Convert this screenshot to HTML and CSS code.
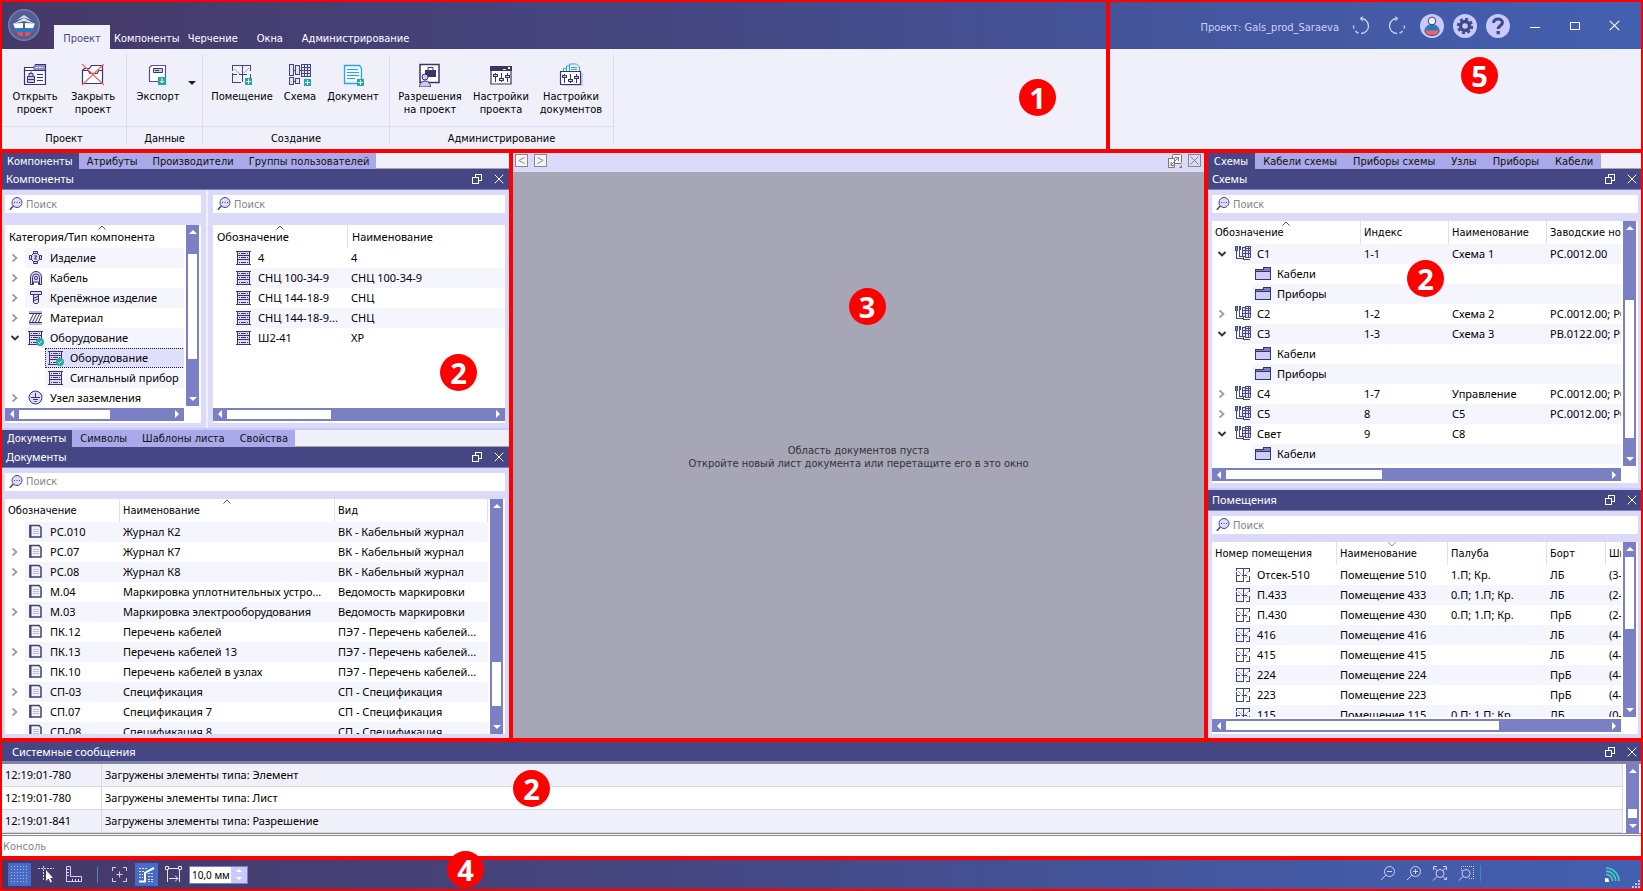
FILE: index.html
```html
<!DOCTYPE html>
<html lang="ru">
<head>
<meta charset="utf-8">
<title>Gals_prod_Saraeva</title>
<link rel="stylesheet" href="styles.css">
</head>
<body>
<svg class="sprite" aria-hidden="true">
  <symbol id="i-search" viewBox="0 0 14 14"><circle cx="8" cy="5.5" r="5" fill="#dcdcfa" stroke="#4a4580"/><path d="M4.3 9 .8 12.8" stroke="#4a4580" stroke-width="1.6"/><path d="M5 5h1v1H5zM7.500 5h1v1h-1zM10 5h1v1h-1z" fill="#4a4580"/></symbol>
  <symbol id="i-right" viewBox="0 0 8 10"><path d="M1.500 1.500 5.500 5l-4 3.500" fill="none" stroke="#9b9b9b" stroke-width="1.700"/></symbol>
  <symbol id="i-down" viewBox="0 0 10 8"><path d="M1.500 2 5 5.500 8.500 2" fill="none" stroke="#333" stroke-width="1.900"/></symbol>
  <symbol id="i-up-sort" viewBox="0 0 8 5"><path d="M.5 4.500 4 1l3.500 3.500" fill="none" stroke="#555"/></symbol>
  <symbol id="i-down-sort" viewBox="0 0 8 5"><path d="M.5.5 4 4 7.500.5" fill="none" stroke="#888"/></symbol>
  <symbol id="i-rack" viewBox="0 0 16 16"><g shape-rendering="crispEdges"><path d="M2 1h11v13H2z" fill="#dcdcfa"/><path d="M0 1h15v1H0zM1 5h13v1H1zM1 9h13v1H1zM0 14h15v1H0zM1 1h1v13H1zM13 1h1v13h-1zM3 3h1v1H3zM5 3h5v1H5zM11 3h1v1h-1zM3 7h1v1H3zM5 7h5v1H5zM11 7h1v1h-1zM3 12h1v1H3zM5 12h5v1H5zM11 12h1v1h-1z" fill="#3c3466"/></g></symbol>
  <symbol id="i-check" viewBox="0 0 16 16"><circle cx="12" cy="12" r="4" fill="#25a9a6"/><path d="m10 12 1.500 1.500L14 10.800" fill="none" stroke="#fff"/></symbol>
  <symbol id="i-item" viewBox="0 0 16 16"><g fill="#dcdcfa" stroke="#3c3466"><path d="M7.500 1v13M1 7.500h13"/><path d="M5.500 1.500h4v2h-4zM5.500 11.500h4v2h-4zM1.500 5.500h2v4h-2zM11.500 5.500h2v4h-2z"/><path d="M5.500 3.500h4l2 2v4l-2 2h-4l-2-2v-4z"/><path d="M6 6h3L6.500 9H9" fill="none"/></g></symbol>
  <symbol id="i-cable" viewBox="0 0 16 16"><g fill="none" stroke="#3c3466"><path d="M2.500 14.500V7a5.500 5.500 0 0 1 11 0v7.500h-3V12h-5v2.500z" fill="#dcdcfa"/><path d="M4.500 14V7.500a3.500 3.500 0 0 1 7 0V14"/><circle cx="8" cy="8" r="1.600"/></g></symbol>
  <symbol id="i-bolt" viewBox="0 0 16 16"><g fill="#dcdcfa" stroke="#3c3466"><path d="M2.500 1.500h11v3h-11z"/><path d="M5.500 4.500h5v8l-1 1h-3l-1-1z"/><path d="m6 8 4-1.500M6 10.500 10 9"/></g></symbol>
  <symbol id="i-material" viewBox="0 0 16 16"><path d="M1 1h13v2H1zM1 13h13v2H1z" fill="#b9b9ee"/><path d="M1 3.500h13M1 12.500h13M1.500 12 5.500 4m-1 8 4-8m-1 8 4-8m-1 8 3-7" fill="none" stroke="#3c3466"/></symbol>
  <symbol id="i-ground" viewBox="0 0 16 16"><circle cx="7.500" cy="7.500" r="6.500" fill="#dcdcfa" stroke="#3c3466"/><path d="M7.500 3v5M3 7.500h9M5 9.500h5M6.500 11.500h2" stroke="#3c3466"/></symbol>
  <symbol id="i-doc" viewBox="0 0 16 16"><path d="M2 1.500h9l2 2V13H2z" fill="#f3f0fb" stroke="#3d4470" stroke-width="1.500"/><path d="M2.500 1v12.500" stroke="#3d4470" stroke-width="2"/><path d="M5 5.500h6M5 7.500h6M5 9.500h6" stroke="#bdbdd4"/></symbol>
  <symbol id="i-scheme" viewBox="0 0 16 16"><g fill="none" stroke="#454a84" shape-rendering="crispEdges"><path d="M.5.500h2v4h-2zM4.500.500h1v3h-1z" fill="#7b80c4"/><path d="M7.500 1.500h3v9h-3zM10.500.500h5v11h-5z" fill="#e3e3fb"/><path d="M7 4.500h9M7 7.500h9M11 2.500h5M13.500 0v12"/><path d="M1.500 5v7.500H8M4.500 4v6.500H7M8.500 11v2.500h6"/></g></symbol>
  <symbol id="i-folder" viewBox="0 0 16 16"><g stroke="#3c3466" shape-rendering="crispEdges"><path d="M.5 4.500h15v9H.5z" fill="#cdcdfb"/><path d="M.5 5.500v-2h8v-2h7v4z" fill="#7b80c4"/></g></symbol>
  <symbol id="i-room" viewBox="0 0 16 16"><path d="M3 4l4 4M10 8l4-4M10 11l3-2" fill="none" stroke="#a5a5d6"/><g fill="none" stroke="#3f4580" shape-rendering="crispEdges"><path d="M1.500 4V1.500h13V5M1.500 5v9.500H9M11 14.500h3.500V9M8.500 1v13M2 8.500h3M7 8.500h5"/></g></symbol>
  <symbol id="i-restore" viewBox="0 0 10 10"><path d="M.5 3.500h6v6h-6zM3.500 3V.5h6v6H7" fill="none" stroke="#fff" shape-rendering="crispEdges"/></symbol>
  <symbol id="i-close" viewBox="0 0 10 10"><path d="m.7.7 8.600 8.600M9.300.7.7 9.300" stroke="currentColor" fill="none"/></symbol>
  <symbol id="i-sliders" viewBox="0 0 22 18"><path d="M1 1h20v16H1z" fill="#fff" stroke="#3c3466" stroke-width="1.200"/><g stroke="#3c3466" fill="#c9c9fb" shape-rendering="crispEdges"><path d="M5.500 6v9M11.500 6v9M17.500 6v9"/><path d="M3.500 7.500h4v2h-4zM9.500 11.500h4v2h-4zM15.500 8.500h4v2h-4z"/></g></symbol>
  <symbol id="i-plus" viewBox="0 0 7 7"><path d="M0 0h7v7H0z" fill="#25a9a6"/><path d="M3.500 1v5M1 3.500h5" stroke="#fff"/></symbol>
</svg>

<div class="app">
  <header class="top">
    <section class="frame ribbon-zone">
      <div class="titlebar">
        <svg class="logo" viewBox="0 0 32 32" aria-label="Логотип"><circle cx="16" cy="16" r="15.200" fill="#526097" stroke="#7a7ca6" stroke-width="1.600"/><path d="M9 11l7-5 7 5-7-2.500zM6 14.500 16 9l10 5.500-10-2.500z" fill="#dfe3f0"/><path d="M5 14.500 15 14v5l-8 .5zM27 14.500 17 14v5l8 .5z" fill="#fff"/><path d="m6.500 19.500 8.500-.5v4l-7 .5zM25.500 19.500 17 19v4l7 .5z" fill="#1f7fc6"/><path d="m8.500 23.500 6.500-.5v4h-3.500zM23.500 23.500 17 23v4h3.500z" fill="#ee4f57"/></svg>
        <nav class="menu">
          <button class="menu-tab on">Проект</button><button class="menu-tab">Компоненты</button><button class="menu-tab">Черчение</button><button class="menu-tab">Окна</button><button class="menu-tab">Администрирование</button>
        </nav>
      </div>
      <div class="ribbon">
        <div class="group">
          <div class="tools">
            <button class="tool w58"><svg viewBox="0 0 24 24"><path d="M1.500 4.500h9l2-3h10v20h-21z" fill="#f4f4ff" stroke="#3c3466" stroke-width="1.200"/><path d="M11 2h11v5H10z" fill="#8b8fd0"/><path d="M2 7.500h20" stroke="#3c3466"/><path d="M13 4.500h7" stroke="#fff" stroke-dasharray="2 1"/><path d="M4.500 13.500h7v6h-7zM6 13v-2.500h4V13M8 8.500v2" fill="#c9c9fb" stroke="#3c3466"/><path d="M4 16.500h8M14 11.500h6M14 14.500h6M14 17.500h6" stroke="#3c3466"/></svg>Открыть<br>проект</button>
            <button class="tool w58"><svg viewBox="0 0 24 24"><path d="M1.500 20.500v-13l2-2h5l2-3h11v18zM2 7.500h5l2 3h7l2-3h4" fill="#fff" stroke="#3c3466" stroke-width="1.200"/><path d="m1 1 22 21M23 1 1 22" stroke="#f0625f" stroke-width="1.100"/></svg>Закрыть<br>проект</button>
          </div>
          <div class="group-name">Проект</div>
        </div>
        <div class="group data">
          <div class="tools">
            <button class="tool w60"><svg viewBox="0 0 24 24"><path d="M3.500 18.500v-14l2-2h14v16z" fill="#fff" stroke="#56528c" stroke-width="1.200"/><path d="M7.500 5.500h9v4h-9z" fill="#c9c9fb" stroke="#3c3466"/><path d="M9 7.500h4" stroke="#3c3466"/><path d="M12 14h8v8h-8z" fill="#25a9a6"/><path d="M16 15v5m-2-2 2 2 2-2" fill="none" stroke="#fff"/></svg>Экспорт</button>
            <button class="drop" aria-label="Ещё"></button>
          </div>
          <div class="group-name">Данные</div>
        </div>
        <div class="group create">
          <div class="tools">
            <button class="tool w72"><svg viewBox="0 0 24 24"><path d="m4 6 6 5M14 10l5-5" stroke="#a5a5d6"/><g fill="none" stroke="#3f4580" shape-rendering="crispEdges"><path d="M2.500 8V2.500h18V8M2.500 10v9.500H11M20.500 11v4M12.500 2v17M3 11.500h4M9 11.500h8"/></g><use href="#i-plus" x="15" y="15" width="7" height="7"/></svg>Помещение</button>
            <button class="tool w44"><svg viewBox="0 0 24 24"><g fill="#e3e3fb" stroke="#3f4580" shape-rendering="crispEdges"><path d="M1.500 1.500h4v11h-4zM7.500 2.500h4v9h-4zM13.500 1.500h9v12h-9zM1.500 14.500h4v7h-4zM7.500 15.500h4v5h-4z"/><path d="M13.500 4.500h9M13.500 7.500h9M13.500 10.500h9M16.500 1v12M19.500 1v12M5 7.500h3M11 7.500h3M5 18.500h3"/></g><use href="#i-plus" x="16" y="16" width="7" height="7"/></svg>Схема</button>
            <button class="tool w62"><svg viewBox="0 0 24 24"><path d="M3.500 2.500h15l2 3v15h-17z" fill="#f4faff" stroke="#25a3f5" stroke-width="1.300"/><path d="M6 6.500h11M6 9.500h12M6 12.500h12M6 15.500h8" stroke="#25a3f5"/><use href="#i-plus" x="16" y="16" width="7" height="7"/></svg>Документ</button>
          </div>
          <div class="group-name">Создание</div>
        </div>
        <div class="group admin">
          <div class="tools">
            <button class="tool w72"><svg viewBox="0 0 24 24"><path d="M2 1.500h19v18H2z" fill="#fff" stroke="#3c3466" stroke-width="1.500"/><path d="M7 7h11v7H7z" fill="#3c3466"/><path d="M10 7V4.500h5V7" fill="none" stroke="#3c3466"/><circle cx="7" cy="14" r="3" fill="#c9c9fb" stroke="#3c3466"/><path d="M1.500 24c0-8 11-8 11 0z" fill="#c9c9fb" stroke="#3c3466"/></svg>Разрешения<br>на проект</button>
            <button class="tool w70"><svg viewBox="0 0 24 24"><use href="#i-sliders" x="1" y="4" width="22" height="18"/><path d="M1 3h22v5H1z" fill="#3c3466"/><path d="M14 6.500h3M19 4l2 2m0-2-2 2" stroke="#fff"/></svg>Настройки<br>проекта</button>
            <button class="tool w70"><svg viewBox="0 0 24 24"><path d="M4 10h20v13H4z" fill="#c9c9fb"/><path d="M4.500 10V5.500h3V3h3V1h7l3 3v6z" fill="#f4faff" stroke="#25a3f5"/><path d="M7.500 5v5M10.500 3v7M12 4.500h6M12 6.500h6" stroke="#25a3f5"/><path d="M1.500 8.500h20v13h-20z" fill="#fff" stroke="#3c3466" stroke-width="1.200"/><g stroke="#3c3466" fill="#c9c9fb" shape-rendering="crispEdges"><path d="M5.500 11v9M11.500 11v9M17.500 11v9"/><path d="M3.500 12.500h4v2h-4zM9.500 16.500h4v2h-4zM15.500 13.500h4v2h-4z"/></g></svg>Настройки<br>документов</button>
          </div>
          <div class="group-name">Администрирование</div>
        </div>
      </div>
      <span class="mark mark-1">1</span>
    </section>
    <section class="frame system-zone">
      <div class="titlebar end">
        <span class="project">Проект: Gals_prod_Saraeva</span>
        <button class="ico" aria-label="Отменить"><svg width="20" height="20" viewBox="0 0 20 20"><path d="M10 2.500a7.500 7.500 0 0 1 0 15M7.500 17.200A7.500 7.500 0 0 1 4.500 15M3 12.500a8 8 0 0 1-.5-3" fill="none" stroke="#cfcff8" stroke-width="1.300"/><path d="M12 .5 9 2.500l3 2.500" fill="none" stroke="#cfcff8"/></svg></button>
        <button class="ico" aria-label="Повторить"><svg width="20" height="20" viewBox="0 0 20 20"><path d="M10 2.500a7.500 7.500 0 0 0 0 15M12.500 17.200a7.500 7.500 0 0 0 3-2.200M17 12.500a8 8 0 0 0 .5-3" fill="none" stroke="#cfcff8" stroke-width="1.300"/><path d="m8 .5 3 2L8 5" fill="none" stroke="#cfcff8"/></svg></button>
        <div class="rounds">
          <button class="ico" aria-label="Пользователь"><svg width="24" height="24" viewBox="0 0 24 24"><circle cx="12" cy="12" r="12" fill="#c9c9fb"/><circle cx="12" cy="7" r="3.800" fill="#f2f2ea" stroke="#3f4580"/><path d="M5.500 17c0-8 13-8 13 0z" fill="#1b7fc5"/><path d="M5 16.500h14c0 6.500-14 6.500-14 0z" fill="#f4645f"/><path d="M5 17c0-8.500 14-8.500 14 0 0 6-14 6-14 0z" fill="none" stroke="#3f4580"/></svg></button>
          <button class="ico" aria-label="Настройки"><svg width="24" height="24" viewBox="0 0 24 24"><circle cx="12" cy="12" r="12" fill="#c9c9fb"/><circle cx="12" cy="12" r="4.500" fill="none" stroke="#3f4a8c" stroke-width="3.400"/><circle cx="12" cy="12" r="7" fill="none" stroke="#3f4a8c" stroke-width="2.400" stroke-dasharray="3 2.500"/></svg></button>
          <button class="ico" aria-label="Справка"><svg width="24" height="24" viewBox="0 0 24 24"><circle cx="12" cy="12" r="12" fill="#c9c9fb"/><path d="M7.500 9c0-5.500 9-5 9-.5 0 3-4.300 3-4.300 6.500" fill="none" stroke="#3f4a8c" stroke-width="3"/><path d="M10.500 17h3.400v3.200h-3.400z" fill="#3f4a8c"/></svg></button>
        </div>
        <div class="window">
          <button class="ico" aria-label="Свернуть"><svg width="12" height="12" viewBox="0 0 12 12"><path d="M1 7.500h10" stroke="#fff"/></svg></button>
          <button class="ico" aria-label="Развернуть"><svg width="12" height="12" viewBox="0 0 12 12"><path d="M1.500 2.500h9v7h-9z" fill="none" stroke="#fff"/></svg></button>
          <button class="ico" aria-label="Закрыть"><svg class="white" width="11" height="11"><use href="#i-close"/></svg></button>
        </div>
      </div>
      <div class="ribbon"></div>
      <span class="mark mark-5">5</span>
    </section>
  </header>

  <main class="work">
    <section class="frame dock">
      <div class="panel comps">
        <div class="tabs"><button class="on">Компоненты</button><button>Атрибуты</button><button>Производители</button><button>Группы пользователей</button></div>
        <div class="caption"><h2>Компоненты</h2><button class="ico" aria-label="Открепить"><svg width="10" height="10"><use href="#i-restore"/></svg></button><button class="ico" aria-label="Закрыть"><svg class="white" width="10" height="10"><use href="#i-close"/></svg></button></div>
        <div class="split">
          <div class="body tall left-body">
            <label class="search"><svg width="14" height="14"><use href="#i-search"/></svg><input type="text" placeholder="Поиск" aria-label="Поиск по категориям"></label>
            <div class="grid both">
              <div class="view">
                <table class="tree big-head cats">
                  <colgroup><col class="c20"><col></colgroup>
                  <thead><tr><th colspan="2">Категория/Тип компонента<svg class="sort"><use href="#i-up-sort"/></svg></th></tr></thead>
                  <tbody>
                    <tr class="alt"><td class="tw"><svg class="r"><use href="#i-right"/></svg></td><td><div class="name"><svg><use href="#i-item"/></svg>Изделие</div></td></tr>
                    <tr><td class="tw"><svg class="r"><use href="#i-right"/></svg></td><td><div class="name"><svg><use href="#i-cable"/></svg>Кабель</div></td></tr>
                    <tr class="alt"><td class="tw"><svg class="r"><use href="#i-right"/></svg></td><td><div class="name"><svg><use href="#i-bolt"/></svg>Крепёжное изделие</div></td></tr>
                    <tr><td class="tw"><svg class="r"><use href="#i-right"/></svg></td><td><div class="name"><svg><use href="#i-material"/></svg>Материал</div></td></tr>
                    <tr class="alt"><td class="tw"><svg class="d"><use href="#i-down"/></svg></td><td><div class="name"><svg><use href="#i-rack"/><use href="#i-check"/></svg>Оборудование</div></td></tr>
                    <tr class="sel"><td class="tw"></td><td class="child"><div class="name"><svg><use href="#i-rack"/><use href="#i-check"/></svg>Оборудование</div></td></tr>
                    <tr class="alt"><td class="tw"></td><td class="child"><div class="name"><svg><use href="#i-rack"/></svg>Сигнальный прибор</div></td></tr>
                    <tr><td class="tw"><svg class="r"><use href="#i-right"/></svg></td><td><div class="name"><svg><use href="#i-ground"/></svg>Узел заземления</div></td></tr>
                  </tbody>
                </table>
              </div>
              <div class="vbar" style="--a:15;--b:105;--c:32"><i class="up"></i><b></b><i class="dn"></i></div>
              <div class="hbar" style="--a:0;--b:91;--c:60"><i class="lf"></i><b></b><i class="rt"></i></div>
            </div>
          </div>
          <div class="body tall right-body">
            <label class="search"><svg width="14" height="14"><use href="#i-search"/></svg><input type="text" placeholder="Поиск" aria-label="Поиск компонентов"></label>
            <div class="grid wide">
              <div class="view">
                <table class="tree big-head">
                  <colgroup><col class="c20"><col class="c115"><col></colgroup>
                  <thead><tr><th colspan="2">Обозначение<svg class="sort"><use href="#i-up-sort"/></svg></th><th>Наименование</th></tr></thead>
                  <tbody>
                    <tr><td class="tw"></td><td><div class="name"><svg><use href="#i-rack"/></svg>4</div></td><td>4</td></tr>
                    <tr class="alt"><td class="tw"></td><td><div class="name"><svg><use href="#i-rack"/></svg>СНЦ 100-34-9</div></td><td>СНЦ 100-34-9</td></tr>
                    <tr><td class="tw"></td><td><div class="name"><svg><use href="#i-rack"/></svg>СНЦ 144-18-9</div></td><td>СНЦ</td></tr>
                    <tr class="alt"><td class="tw"></td><td><div class="name"><svg><use href="#i-rack"/></svg>СНЦ 144-18-9...</div></td><td>СНЦ</td></tr>
                    <tr><td class="tw"></td><td><div class="name"><svg><use href="#i-rack"/></svg>Ш2-41</div></td><td>ХР</td></tr>
                  </tbody>
                </table>
              </div>
              <div class="hbar" style="--a:0;--b:104;--c:160"><i class="lf"></i><b></b><i class="rt"></i></div>
            </div>
          </div>
        </div>
      </div>
      <div class="panel docs">
        <div class="tabs"><button class="on">Документы</button><button>Символы</button><button>Шаблоны листа</button><button>Свойства</button></div>
        <div class="caption"><h2>Документы</h2><button class="ico" aria-label="Открепить"><svg width="10" height="10"><use href="#i-restore"/></svg></button><button class="ico" aria-label="Закрыть"><svg class="white" width="10" height="10"><use href="#i-close"/></svg></button></div>
        <div class="body">
          <label class="search"><svg width="14" height="14"><use href="#i-search"/></svg><input type="text" placeholder="Поиск" aria-label="Поиск документов"></label>
          <div class="grid tallbar">
            <div class="view">
              <table class="tree">
                <colgroup><col class="c20"><col class="c95"><col class="c215"><col></colgroup>
                <thead><tr><th colspan="2">Обозначение</th><th>Наименование<svg class="sort"><use href="#i-up-sort"/></svg></th><th>Вид</th></tr></thead>
                <tbody>
                  <tr class="alt"><td class="tw"></td><td><div class="name"><svg><use href="#i-doc"/></svg>РС.010</div></td><td>Журнал К2</td><td>ВК - Кабельный журнал</td></tr>
                  <tr><td class="tw"><svg class="r"><use href="#i-right"/></svg></td><td><div class="name"><svg><use href="#i-doc"/></svg>РС.07</div></td><td>Журнал К7</td><td>ВК - Кабельный журнал</td></tr>
                  <tr class="alt"><td class="tw"><svg class="r"><use href="#i-right"/></svg></td><td><div class="name"><svg><use href="#i-doc"/></svg>РС.08</div></td><td>Журнал К8</td><td>ВК - Кабельный журнал</td></tr>
                  <tr><td class="tw"></td><td><div class="name"><svg><use href="#i-doc"/></svg>М.04</div></td><td>Маркировка уплотнительных устро...</td><td>Ведомость маркировки</td></tr>
                  <tr class="alt"><td class="tw"><svg class="r"><use href="#i-right"/></svg></td><td><div class="name"><svg><use href="#i-doc"/></svg>М.03</div></td><td>Маркировка электрооборудования</td><td>Ведомость маркировки</td></tr>
                  <tr><td class="tw"></td><td><div class="name"><svg><use href="#i-doc"/></svg>ПК.12</div></td><td>Перечень кабелей</td><td>ПЭ7 - Перечень кабелей...</td></tr>
                  <tr class="alt"><td class="tw"><svg class="r"><use href="#i-right"/></svg></td><td><div class="name"><svg><use href="#i-doc"/></svg>ПК.13</div></td><td>Перечень кабелей 13</td><td>ПЭ7 - Перечень кабелей...</td></tr>
                  <tr><td class="tw"></td><td><div class="name"><svg><use href="#i-doc"/></svg>ПК.10</div></td><td>Перечень кабелей в узлах</td><td>ПЭ7 - Перечень кабелей...</td></tr>
                  <tr class="alt"><td class="tw"><svg class="r"><use href="#i-right"/></svg></td><td><div class="name"><svg><use href="#i-doc"/></svg>СП-03</div></td><td>Спецификация</td><td>СП - Спецификация</td></tr>
                  <tr><td class="tw"><svg class="r"><use href="#i-right"/></svg></td><td><div class="name"><svg><use href="#i-doc"/></svg>СП.07</div></td><td>Спецификация 7</td><td>СП - Спецификация</td></tr>
                  <tr class="alt"><td class="tw"></td><td><div class="name"><svg><use href="#i-doc"/></svg>СП-08</div></td><td>Спецификация 8</td><td>СП - Спецификация</td></tr>
                </tbody>
              </table>
            </div>
            <div class="vbar" style="--a:150;--b:44;--c:14"><i class="up"></i><b></b><i class="dn"></i></div>
          </div>
        </div>
      </div>
      <span class="mark mark-2a">2</span>
    </section>

    <section class="frame canvas">
      <div class="canvas-bar">
        <button class="box" aria-label="Назад"><svg width="7" height="7" viewBox="0 0 7 7"><path d="M6.500.5.8 3.500l5.700 3" fill="none" stroke="#888"/></svg></button>
        <button class="box" aria-label="Вперёд"><svg width="7" height="7" viewBox="0 0 7 7"><path d="m.5.5 5.700 3-5.700 3" fill="none" stroke="#888"/></svg></button>
        <button class="ico push" aria-label="Развернуть лист"><svg width="14" height="14" viewBox="0 0 14 14"><path d="M4.500.500h9v9h-9z" fill="#f4f4fa" stroke="#777" stroke-dasharray="8 1"/><path d="M.5 4.500h6v9h-6z" fill="#f4f4fa" stroke="#777"/><path d="m3 11 7-7M7 3.500h3.500V7M3 8v3.500h3" fill="none" stroke="#777"/><path d="M14 11v3h-3z" fill="#777"/></svg></button>
        <button class="box" aria-label="Закрыть лист"><svg class="gray" width="9" height="9"><use href="#i-close"/></svg></button>
      </div>
      <div class="empty"><p>Область документов пуста<br>Откройте новый лист документа или перетащите его в это окно</p></div>
      <span class="mark mark-3">3</span>
    </section>

    <section class="frame dock right-dock">
      <div class="panel schemes">
        <div class="tabs snug"><button class="on">Схемы</button><button>Кабели схемы</button><button>Приборы схемы</button><button>Узлы</button><button>Приборы</button><button>Кабели</button></div>
        <div class="caption"><h2>Схемы</h2><button class="ico" aria-label="Открепить"><svg width="10" height="10"><use href="#i-restore"/></svg></button><button class="ico" aria-label="Закрыть"><svg class="white" width="10" height="10"><use href="#i-close"/></svg></button></div>
        <div class="body">
          <label class="search"><svg width="14" height="14"><use href="#i-search"/></svg><input type="text" placeholder="Поиск" aria-label="Поиск схем"></label>
          <div class="grid both">
            <div class="view">
              <table class="tree">
                <colgroup><col class="c20"><col class="c129"><col class="c88"><col class="c98"><col></colgroup>
                <thead><tr><th colspan="2">Обозначение<svg class="sort"><use href="#i-up-sort"/></svg></th><th>Индекс</th><th>Наименование</th><th>Заводские номера</th></tr></thead>
                <tbody>
                  <tr class="alt"><td class="tw"><svg class="d"><use href="#i-down"/></svg></td><td><div class="name"><svg><use href="#i-scheme"/></svg>С1</div></td><td>1-1</td><td>Схема 1</td><td>РС.0012.00</td></tr>
                  <tr><td class="tw"></td><td class="child"><div class="name"><svg><use href="#i-folder"/></svg>Кабели</div></td><td></td><td></td><td></td></tr>
                  <tr class="alt"><td class="tw"></td><td class="child"><div class="name"><svg><use href="#i-folder"/></svg>Приборы</div></td><td></td><td></td><td></td></tr>
                  <tr><td class="tw"><svg class="r"><use href="#i-right"/></svg></td><td><div class="name"><svg><use href="#i-scheme"/></svg>С2</div></td><td>1-2</td><td>Схема 2</td><td>РС.0012.00; РС.0013.00</td></tr>
                  <tr class="alt"><td class="tw"><svg class="d"><use href="#i-down"/></svg></td><td><div class="name"><svg><use href="#i-scheme"/></svg>С3</div></td><td>1-3</td><td>Схема 3</td><td>РВ.0122.00; РВ.0123.00</td></tr>
                  <tr><td class="tw"></td><td class="child"><div class="name"><svg><use href="#i-folder"/></svg>Кабели</div></td><td></td><td></td><td></td></tr>
                  <tr class="alt"><td class="tw"></td><td class="child"><div class="name"><svg><use href="#i-folder"/></svg>Приборы</div></td><td></td><td></td><td></td></tr>
                  <tr><td class="tw"><svg class="r"><use href="#i-right"/></svg></td><td><div class="name"><svg><use href="#i-scheme"/></svg>С4</div></td><td>1-7</td><td>Управление</td><td>РС.0012.00; РС.0013.00</td></tr>
                  <tr class="alt"><td class="tw"><svg class="r"><use href="#i-right"/></svg></td><td><div class="name"><svg><use href="#i-scheme"/></svg>С5</div></td><td>8</td><td>С5</td><td>РС.0012.00; РС.0013.00</td></tr>
                  <tr><td class="tw"><svg class="d"><use href="#i-down"/></svg></td><td><div class="name"><svg><use href="#i-scheme"/></svg>Свет</div></td><td>9</td><td>С8</td><td></td></tr>
                  <tr class="alt"><td class="tw"></td><td class="child"><div class="name"><svg><use href="#i-folder"/></svg>Кабели</div></td><td></td><td></td><td></td></tr>
                </tbody>
              </table>
            </div>
            <div class="vbar" style="--a:65;--b:139;--c:14"><i class="up"></i><b></b><i class="dn"></i></div>
            <div class="hbar" style="--a:0;--b:156;--c:225"><i class="lf"></i><b></b><i class="rt"></i></div>
          </div>
        </div>
      </div>
      <div class="panel rooms">
        <div class="caption"><h2>Помещения</h2><button class="ico" aria-label="Открепить"><svg width="10" height="10"><use href="#i-restore"/></svg></button><button class="ico" aria-label="Закрыть"><svg class="white" width="10" height="10"><use href="#i-close"/></svg></button></div>
        <div class="body">
          <label class="search"><svg width="14" height="14"><use href="#i-search"/></svg><input type="text" placeholder="Поиск" aria-label="Поиск помещений"></label>
          <div class="grid both">
            <div class="view">
              <table class="tree">
                <colgroup><col class="c20"><col class="c105"><col class="c111"><col class="c99"><col class="c59"><col></colgroup>
                <thead><tr><th colspan="2">Номер помещения</th><th>Наименование<svg class="sort"><use href="#i-down-sort"/></svg></th><th>Палуба</th><th>Борт</th><th>Шпангоут</th></tr></thead>
                <tbody>
                  <tr><td class="tw"></td><td><div class="name"><svg><use href="#i-room"/></svg>Отсек-510</div></td><td>Помещение 510</td><td>1.П; Кр.</td><td>ЛБ</td><td>(3-4)</td></tr>
                  <tr class="alt"><td class="tw"></td><td><div class="name"><svg><use href="#i-room"/></svg>П.433</div></td><td>Помещение 433</td><td>0.П; 1.П; Кр.</td><td>ЛБ</td><td>(2-3)</td></tr>
                  <tr><td class="tw"></td><td><div class="name"><svg><use href="#i-room"/></svg>П.430</div></td><td>Помещение 430</td><td>0.П; 1.П; Кр.</td><td>ПрБ</td><td>(2-3)</td></tr>
                  <tr class="alt"><td class="tw"></td><td><div class="name"><svg><use href="#i-room"/></svg>416</div></td><td>Помещение 416</td><td></td><td>ЛБ</td><td>(4-5)</td></tr>
                  <tr><td class="tw"></td><td><div class="name"><svg><use href="#i-room"/></svg>415</div></td><td>Помещение 415</td><td></td><td>ЛБ</td><td>(4-5)</td></tr>
                  <tr class="alt"><td class="tw"></td><td><div class="name"><svg><use href="#i-room"/></svg>224</div></td><td>Помещение 224</td><td></td><td>ПрБ</td><td>(4-5)</td></tr>
                  <tr><td class="tw"></td><td><div class="name"><svg><use href="#i-room"/></svg>223</div></td><td>Помещение 223</td><td></td><td>ПрБ</td><td>(4-5)</td></tr>
                  <tr class="alt"><td class="tw"></td><td><div class="name"><svg><use href="#i-room"/></svg>115</div></td><td>Помещение 115</td><td>0.П; 1.П; Кр.</td><td>ЛБ</td><td>(0-1)</td></tr>
                </tbody>
              </table>
            </div>
            <div class="vbar" style="--a:1;--b:72;--c:74"><i class="up"></i><b></b><i class="dn"></i></div>
            <div class="hbar" style="--a:0;--b:273;--c:108"><i class="lf"></i><b></b><i class="rt"></i></div>
          </div>
        </div>
      </div>
      <span class="mark mark-2b">2</span>
    </section>
  </main>

  <section class="frame messages">
    <div class="caption inset"><h2>Системные сообщения</h2><button class="ico" aria-label="Открепить"><svg width="10" height="10"><use href="#i-restore"/></svg></button><button class="ico" aria-label="Закрыть"><svg class="white" width="10" height="10"><use href="#i-close"/></svg></button></div>
    <div class="log">
      <table>
        <colgroup><col class="c100"><col></colgroup>
        <tbody>
          <tr><td>12:19:01-780</td><td>Загружены элементы типа: Элемент</td></tr>
          <tr><td>12:19:01-780</td><td>Загружены элементы типа: Лист</td></tr>
          <tr><td>12:19:01-841</td><td>Загружены элементы типа: Разрешение</td></tr>
        </tbody>
      </table>
      <div class="vbar" style="--a:30;--b:9;--c:1"><i class="up"></i><b></b><i class="dn"></i></div>
    </div>
    <input class="console" type="text" placeholder="Консоль" aria-label="Консоль">
    <span class="mark mark-2c">2</span>
  </section>

  <footer class="frame status">
    <button class="sq on" aria-label="Сетка"><svg viewBox="0 0 23 23"><path d="M3 3.500h17M3 6.500h17M3 9.500h17M3 12.500h17M3 15.500h17M3 18.500h17" stroke="#aebcf2" stroke-dasharray="1 2"/></svg></button>
    <button class="sq" aria-label="Привязка курсора"><svg viewBox="0 0 23 23"><path d="M8.500 3v15M3 5.500h16" stroke="#cfcff8" stroke-dasharray="2 1" fill="none"/><path d="M11 7v11l2.500-2.500 2 4 1.500-1-2-3.500h3z" fill="#fff"/></svg></button>
    <button class="sq" aria-label="Линейка"><svg viewBox="0 0 23 23"><path d="M4.500 3.500h4v10h11v5h-15zM5 6.500h2M5 9.500h2M5 12.500h2M10.500 18v-2M13.500 18v-2M16.500 18v-2" stroke="#cfcff8" fill="none"/></svg></button>
    <span class="bar"></span>
    <button class="sq" aria-label="Центрировать"><svg viewBox="0 0 23 23"><path d="M8 4.500H4.500V8M15 4.500h3.500V8M8 18.500H4.500V15M15 18.500h3.500V15M11.500 8.500v6M8.500 11.500h6" stroke="#cfcff8" fill="none"/></svg></button>
    <button class="sq on" aria-label="Привязка к сетке"><svg viewBox="0 0 23 23"><path d="M4 5.500h8M4 8.500h6M4 11.500h4M4 14.500h4M13 10.500h6M13 13.500h6M13 16.500h6M13 18.500h6" stroke="#dfe3fb" stroke-dasharray="2 1"/><path d="M4 18.500h6V10l3-2 6-3" stroke="#fff" stroke-width="2" fill="none"/></svg></button>
    <button class="sq" aria-label="Размер"><svg viewBox="0 0 23 23"><path d="M6 5.500h11M5.500 6v13M17.500 6v13M7 15.500h9M13 12.500l3 3-3 3" stroke="#e6e6ff" fill="none"/><path d="M3.500 3.500h3v3h-3zM16.500 3.500h3v3h-3z" fill="#45407a" stroke="#e6e6ff"/></svg></button>
    <div class="step"><input type="text" value="10,0 мм" aria-label="Шаг сетки"><span class="spin"><i class="up"></i><i class="dn"></i></span></div>
    <div class="zoom">
      <button class="ico" aria-label="Уменьшить"><svg viewBox="0 0 16 16"><g fill="none" stroke="#cfcff8"><circle cx="9.500" cy="6.500" r="5"/><path d="M6 10 1 15M7 6.500h5"/></g></svg></button>
      <button class="ico" aria-label="Увеличить"><svg viewBox="0 0 16 16"><g fill="none" stroke="#cfcff8"><circle cx="9.500" cy="6.500" r="5"/><path d="M6 10 1 15M7 6.500h5M9.500 4v5"/></g></svg></button>
      <button class="ico" aria-label="Показать всё"><svg viewBox="0 0 16 16"><g fill="none" stroke="#cfcff8"><circle cx="8" cy="8.500" r="4"/><path d="M5 11.500 1 15.500M11 11.500l3 3M5 5.500l-3-3M11 5.500l3-3M1.500 5V1.500H5M11 1.500h3.500V5M14.500 12v2.500H12"/></g></svg></button>
      <button class="ico" aria-label="Показать область"><svg viewBox="0 0 16 16"><g fill="none" stroke="#cfcff8"><path d="M3.500 6V1.500h12v12H11" stroke-dasharray="1 1"/><circle cx="8" cy="8.500" r="4"/><path d="M5 11.500 1 15.500"/></g></svg></button>
      <span class="bar"></span>
    </div>
    <svg class="link" viewBox="0 0 15 15"><g fill="none" stroke="#3ccfc0" stroke-width="1.700"><path d="M1 7.500A6.500 6.500 0 0 1 7.500 14M1 4.200A9.800 9.800 0 0 1 10.800 14M1 1a13 13 0 0 1 13 13"/></g><path d="M0 11l3.500.5L4 15H0z" fill="#fff"/></svg>
    <svg class="grip" viewBox="0 0 9 9"><path d="M6 0h2v2H6zM3 3h2v2H3zM6 3h2v2H6zM0 6h2v2H0zM3 6h2v2H3zM6 6h2v2H6z" fill="#c2c2c2"/></svg>
    <span class="mark mark-4">4</span>
  </footer>
</div>
</body>
</html>
```

FILE: styles.css
```css
:root {
  --ui: "DejaVu Sans Condensed", "DejaVu Sans", sans-serif;
  --text: "Noto Sans", "Open Sans", sans-serif;
  --red: #ff0000;
  --navy: #454785;
  --lilac: #dbdbf9;
  --bar: #7b80c4;
  --paper: #f0f0fa;
  --chrome: linear-gradient(90deg, #453968, #454680 40%, #4457a0 75%, #4360b0);
}

* { box-sizing: border-box; }

body {
  margin: 0;
  font: 11px/13px var(--ui);
  color: #000;
}

button, input { font: inherit; color: inherit; border: 0; background: none; margin: 0; padding: 0; }
h2, p { margin: 0; }
svg { display: block; }
.sprite { position: absolute; width: 0; height: 0; }
.white { color: #fff; }
.gray { color: #777; }

.app {
  display: grid;
  grid-template-rows: auto minmax(0, 1fr) auto auto;
  height: 100vh;
}

.frame { position: relative; border: 2px solid var(--red); min-width: 0; }

.mark {
  position: absolute;
  z-index: 2;
  display: grid;
  place-items: center;
  width: 37px;
  height: 37px;
  border-radius: 50%;
  background: var(--red);
  color: #fff;
  font: bold 29px/37px "Open Sans", var(--text);
}
.mark-1 { right: 50px; top: 77px; }
.mark-5 { right: 143px; top: 55px; }
.mark-2a { right: 32px; top: 201px; }
.mark-2b { left: 199px; top: 107px; }
.mark-2c { left: 511px; top: 28px; }
.mark-3 { left: 50%; top: 135px; margin-left: -10px; }
.mark-4 { left: 445px; top: -9px; }

/* Title bar and ribbon */
.top {
  display: grid;
  grid-template-columns: 1108fr 535fr;
  background: var(--chrome);
}
.titlebar { display: flex; height: 47px; padding-left: 6px; }
.titlebar.end { justify-content: flex-end; align-items: center; padding: 0 21px 0 0; }
.logo { width: 32px; height: 32px; margin: 7px 14px 0 0; }
.menu { display: flex; align-items: flex-end; }
.menu-tab { min-width: 56px; height: 24px; padding: 2px 4px 0; color: #fff; }
.menu-tab.on { background: var(--paper); color: var(--navy); }
.project { color: #cfcff8; margin-right: 12px; padding-top: 4px; }
.ico { display: grid; place-items: center; }
.titlebar .ico + .ico { margin-left: 16px; }
.titlebar .rounds { display: flex; margin-left: 13px; }
.titlebar .rounds .ico + .ico { margin-left: 9px; }
.window { display: flex; margin-left: 19px; }
.titlebar .window .ico + .ico { margin-left: 28px; }

.ribbon { display: flex; height: 100px; padding-top: 5px; background: var(--paper); }
.group { height: 90px; border-right: 1px solid var(--lilac); display: flex; flex-direction: column; }
.group .tools { flex: 1; display: flex; align-items: flex-start; padding: 9px 4px 0; border-bottom: 1px solid var(--lilac); }
.group.data .tools { padding: 9px 4px 0 1px; }
.group.create .tools { padding: 9px 5px 0 3px; }
.group.admin .tools { padding: 9px 7px 0 4px; }
.group-name { height: 17px; padding-top: 5px; text-align: center; }
.tool { display: block; text-align: center; }
.tool svg { width: 24px; height: 24px; margin: 0 auto 3px; }
.w44 { width: 44px; }
.w58 { width: 58px; }
.w60 { width: 60px; }
.w62 { width: 62px; }
.w70 { width: 70px; }
.w72 { width: 72px; }
.drop { border: 4px solid transparent; border-top-color: #222; margin: 18px 2px 0 0; }

/* Work area */
.work { display: grid; grid-template: minmax(0, 1fr) / 511fr 695fr 437fr; min-height: 0; }
.dock { display: flex; flex-direction: column; background: var(--lilac); min-height: 0; }
.panel { display: flex; flex-direction: column; min-height: 0; overflow: hidden; }
.comps { flex: 275 1 0; border-bottom: 2px solid #c9c9fa; }
.docs { flex: 309 1 0; }
.schemes { flex: 336 1 0; border-bottom: 2px solid #c9c9fa; }
.rooms { flex: 248 1 0; }

.tabs { display: flex; flex: none; height: 16px; background: var(--paper); border-bottom: 1px solid #a5a5a5; }
.docs .tabs { height: 17px; }
.tabs button { height: 16px; padding: 0 7px 0 8px; background: #a9a9ea; color: #111; white-space: nowrap; }
.docs .tabs button { height: 17px; }
.tabs button.on { background: var(--navy); color: #fff; padding: 0 6px 0 5px; }
.tabs.snug button { padding: 0 8px; }
.tabs.snug button.on { padding: 0 7px 0 6px; }

.caption {
  display: flex;
  flex: none;
  align-items: center;
  height: 21px;
  padding: 0 5px 0 4px;
  background: var(--navy);
  border-bottom: 1px solid var(--bar);
}
.right-dock .caption { padding-right: 4px; }
.caption.inset { padding: 0 4px 0 10px; height: 20px; }
.caption h2 { flex: 1; font: 11px/18px var(--text); color: #fff; }
.caption .ico + .ico { margin-left: 12px; }

.split { flex: 1; display: grid; grid-template: minmax(0, 1fr) / 204fr 2px 301fr; grid-template-areas: "a . b"; min-height: 0; background: var(--paper); }
.body { flex: 1; display: flex; flex-direction: column; min-height: 0; min-width: 0; padding: 5px 3px 5px 4px; background: var(--lilac); }
.left-body { grid-area: a; padding: 5px 5px 5px 3px; }
.right-body { grid-area: b; padding: 5px 4px 5px 5px; }
.docs .body { padding: 5px 4px 4px 3px; }
.rooms .body { padding-bottom: 4px; }
.search { flex: none; display: flex; align-items: center; height: 18px; padding-left: 4px; background: #fff; margin-bottom: 8px; }
.tall .search { margin-bottom: 12px; }
.search input { flex: 1; min-width: 0; margin-left: 3px; outline: 0; }
input::placeholder { color: #858585; opacity: 1; }

.grid { flex: 1; display: grid; min-height: 0; background: #fff; gap: 2px; }
.grid.both { grid-template: minmax(0, 1fr) 13px / minmax(0, 1fr) 13px; padding: 0 2px 2px 0; }
.grid.wide { grid-template: minmax(0, 1fr) 13px / minmax(0, 1fr); padding-bottom: 2px; }
.grid.tallbar { grid-template: minmax(0, 1fr) / minmax(0, 1fr) 13px; padding-right: 2px; }
.view { overflow: hidden; min-height: 0; }

table { border-collapse: separate; border-spacing: 0; table-layout: fixed; width: 100%; }
.cats { width: 194px; }
.tree th { position: relative; height: 23px; padding: 0 0 0 3px; font: 11px/13px var(--ui); text-align: left; white-space: nowrap; overflow: hidden; border-right: 1px solid #e0e0e8; }
.tree th:last-child { border-right: 0; }
.docs .tree th:last-child { border-right: 1px solid #e0e0e8; }
.tree.big-head th { font: 11px/13px var(--text); padding-left: 4px; }
.sort { position: absolute; left: 50%; top: 0; width: 8px; height: 5px; margin-left: -4px; }
.tree td { height: 20px; padding: 0 0 0 3px; font: 11px/18px var(--text); white-space: nowrap; overflow: hidden; }
.tree tbody tr td:nth-child(2) { padding-left: 0; }
.tree tr.alt td:not(.tw) { background: #f5f5fe; }
.tree td.tw { padding-left: 5px; }
.tw svg.r { width: 8px; height: 10px; margin-left: 1px; }
.tw svg.d { width: 10px; height: 8px; }
.name { display: flex; align-items: center; height: 20px; padding-left: 3px; }
.name svg { width: 16px; height: 16px; margin-right: 6px; flex: none; }
.tree tbody td.child { border-left: 20px solid #fff; }
.sel .name { background: #dfdffb; border: 1px dotted #222; padding-left: 2px; }
.c20 { width: 20px; }
.c59 { width: 59px; }
.c88 { width: 88px; }
.c95 { width: 95px; }
.c98 { width: 98px; }
.c99 { width: 99px; }
.c100 { width: 100px; }
.c105 { width: 105px; }
.c111 { width: 111px; }
.c115 { width: 115px; }
.c129 { width: 129px; }
.c215 { width: 215px; }

/* Scroll bars */
.vbar, .hbar { display: flex; background: var(--bar); }
.vbar { flex-direction: column; padding: 0 2px; }
.hbar { padding: 2px 0; grid-column: 1; }
.vbar b, .hbar b { flex: var(--b) 1 0; background: #fff; }
.vbar::before, .hbar::before { content: ""; order: 1; flex: var(--a) 1 0; }
.vbar::after, .hbar::after { content: ""; order: 3; flex: var(--c) 1 0; }
.vbar i:first-child, .hbar i:first-child { order: 0; }
.vbar b, .hbar b { order: 2; }
.vbar i:last-child, .hbar i:last-child { order: 4; }
.vbar i, .hbar i { flex: none; display: grid; place-items: center; }
.vbar i { height: 14px; }
.hbar i { width: 14px; }
i::before { content: ""; border: 4px solid transparent; }
.up::before { border-top-width: 0; border-bottom-color: #fff; }
.dn::before { border-bottom-width: 0; border-top-color: #fff; }
.lf::before { border-left-width: 0; border-right-color: #fff; }
.rt::before { border-right-width: 0; border-left-color: #fff; }

/* Canvas */
.canvas { display: flex; flex-direction: column; background: #a6a6b6; }
.canvas-bar { display: flex; gap: 6px; height: 19px; padding: 1px 3px 0 2px; background: var(--lilac); align-items: flex-start; }
.box { display: grid; place-items: center; width: 13px; height: 13px; border: 1px solid #888; background: #f4f4fa; }
.box:last-child { background: none; }
.push { margin-left: auto; }
.empty { flex: 1; display: grid; place-items: center; padding-top: 3px; text-align: center; color: #333; }

/* Messages */
.messages { background: #fff; }
.log { display: grid; grid-template-columns: minmax(0, 1fr) 13px; gap: 3px; padding-right: 2px; border-top: 2px solid #85858f; border-bottom: 3px double #85858f; }
.log td { height: 23px; padding: 0 0 0 3px; font: 11px/18px var(--text); border-right: 1px solid #d9d9d9; border-bottom: 1px solid #d9d9d9; }
.log tr:nth-child(odd) td { background: var(--paper); }
.console { display: block; width: 100%; height: 20px; padding-left: 1px; outline: 0; }

/* Status bar */
.status { display: flex; align-items: center; height: 33px; padding: 0 21px 0 6px; background: var(--chrome); }
.sq { width: 23px; height: 23px; margin-right: 4px; }
.sq.on { background: #466bc9; }
.status .bar { width: 1px; height: 16px; margin: 0 10px 0 8px; background: #4187c4; }
.step { display: flex; height: 18px; border: 1px solid #7b80c4; background: #fff; }
.step input { width: 41px; padding-left: 2px; font: 10px/16px var(--text); outline: 0; }
.spin { display: grid; width: 16px; background: #c9c9fb; place-items: center; }
.spin i { display: grid; }
.spin i::before { border-width: 3px; }
.spin .up::before { border-top-width: 0; }
.spin .dn::before { border-bottom-width: 0; }
.zoom { display: flex; align-items: center; gap: 10px; margin-left: auto; padding: 0 124px 3px 0; }
.zoom svg { width: 16px; height: 16px; }
.status .zoom .bar { margin: 0 0 0 -4px; }
.link { width: 15px; height: 15px; }
.grip { position: absolute; right: 0; bottom: 0; width: 9px; height: 9px; }
```
